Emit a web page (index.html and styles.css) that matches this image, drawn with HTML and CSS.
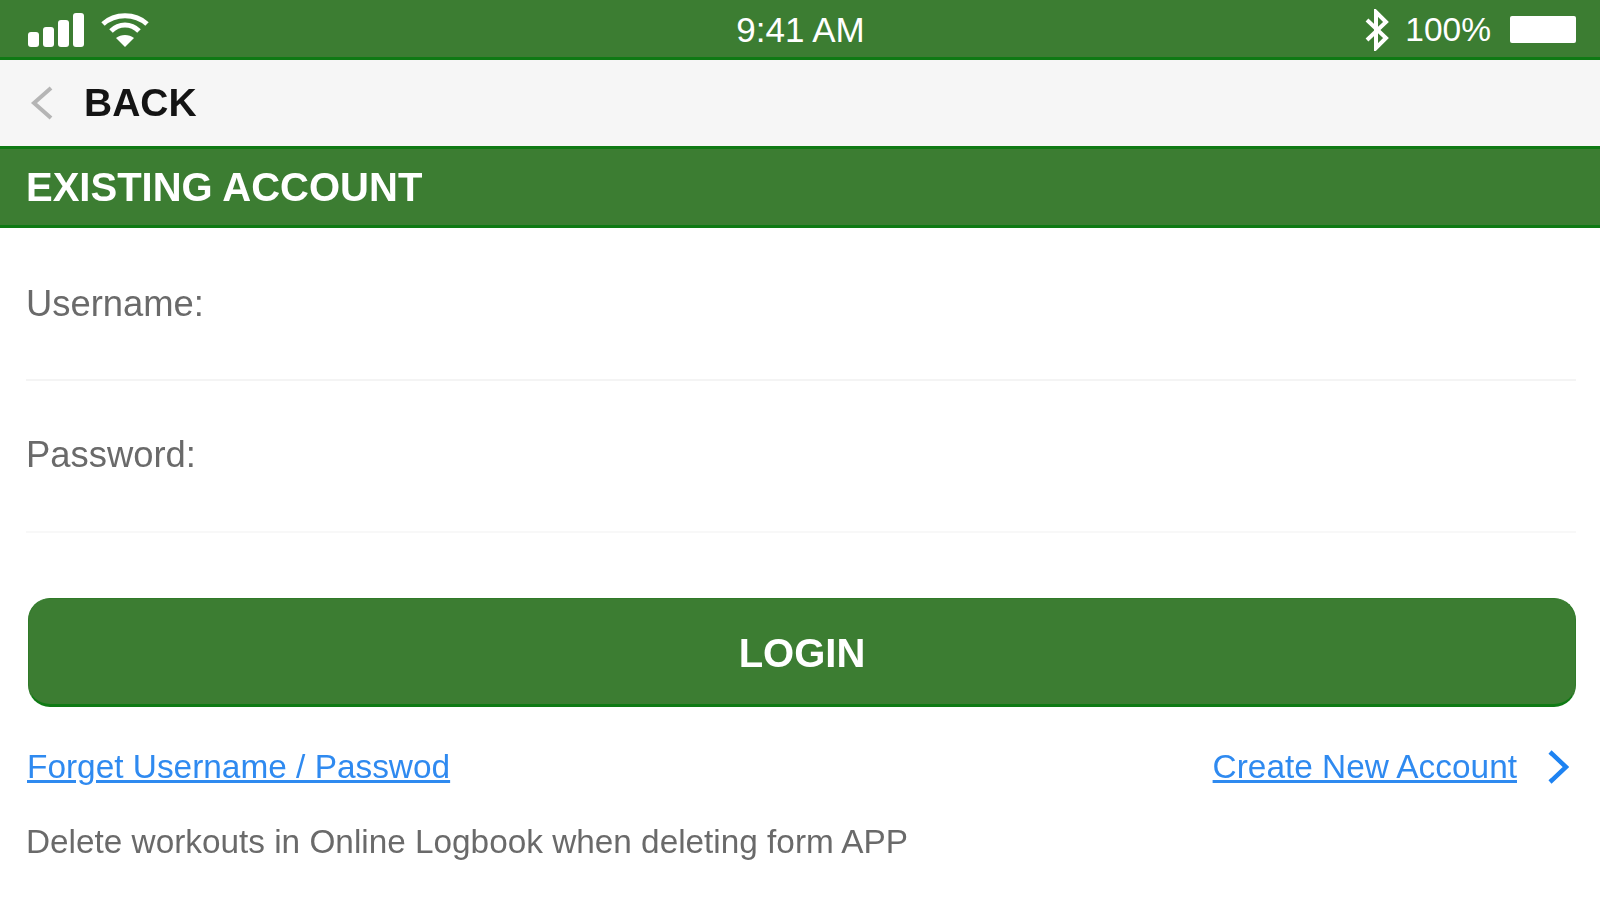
FILE: index.html
```html
<!DOCTYPE html>
<html lang="en">
  <head>
    <meta name="viewport" content="width=device-width, initial-scale=1.0" />
    <title>Existing Account</title>
    <link rel="stylesheet" href="styles.css">
  </head>
  <body>
    <div class="status-bar">
      <div class="status-left">
        <svg class="signal" width="56" height="34" viewBox="0 0 56 34">
          <rect x="0" y="19" width="11" height="15" rx="3" />
          <rect x="15" y="14" width="11" height="20" rx="3" />
          <rect x="30" y="7" width="11" height="27" rx="3" />
          <rect x="45" y="0" width="11" height="34" rx="3" />
        </svg>
        <svg class="wifi" width="50" height="38" viewBox="0 0 50 38">
          <path d="M3 13 C15 2 35 2 47 13" />
          <path d="M11 20 C19 12 31 12 39 20" />
          <path class="wifi-dot" d="M16 27 C21 23 29 23 34 27 L25 36 Z" />
        </svg>
      </div>
      <div class="status-time">9:41 AM</div>
      <div class="status-right">
        <svg class="bluetooth" width="26" height="42" viewBox="0 0 26 42">
          <path d="M3 11 L22 29 L12 39 L12 3 L22 13 L3 31" />
        </svg>
        <span class="battery-text">100%</span>
        <div class="battery"></div>
      </div>
    </div>

    <div class="back-bar">
      <svg class="back-arrow" width="24" height="36" viewBox="0 0 24 36">
        <path d="M21 3 L4 18 L21 33" />
      </svg>
      <span class="back-text">BACK</span>
    </div>

    <div class="section-head">EXISTING ACCOUNT</div>

    <div class="form">
      <div class="field">Username:</div>
      <div class="field field-second">Password:</div>

      <button class="login-btn">LOGIN</button>

      <div class="links">
        <a class="link" href="#">Forget Username / Passwod</a>
        <div class="create">
          <a class="link" href="#">Create New Account</a>
          <svg class="create-arrow" width="22" height="36" viewBox="0 0 22 36">
            <path d="M3 3 L19 18 L3 33" />
          </svg>
        </div>
      </div>

      <p class="note">Delete workouts in Online Logbook when deleting form APP</p>
    </div>
  </body>
</html>
```

FILE: styles.css
```css
* {
  box-sizing: border-box;
}

body {
  margin: 0;
  height: 900px;
  overflow: hidden;
  background-color: #fff;
  font-family: "Liberation Sans", Arial, sans-serif;
  filter: blur(0.7px);
}

.status-bar {
  height: 60px;
  padding: 2px 24px 0 28px;
  display: grid;
  grid-template-columns: 1fr auto 1fr;
  align-items: center;
  background-color: #3c7d32;
  border-bottom: 3px solid #0f7a14;
  color: #fff;
}

.status-left {
  display: flex;
  align-items: center;
  gap: 16px;
}

.signal {
  fill: #fff;
}

.wifi {
  fill: none;
  stroke: #fff;
  stroke-width: 5;
}

.wifi-dot {
  fill: #fff;
  stroke: none;
}

.status-time {
  font-size: 35px;
  margin-left: -3px;
}

.status-right {
  display: flex;
  align-items: center;
  justify-content: flex-end;
}

.bluetooth {
  fill: none;
  stroke: #fff;
  stroke-width: 4;
}

.battery-text {
  margin-left: 15px;
  font-size: 33.5px;
}

.battery {
  width: 66px;
  height: 27px;
  margin-left: 19px;
  background-color: #fff;
  border-radius: 2px;
}

.back-bar {
  height: 86px;
  padding-left: 30px;
  display: flex;
  align-items: center;
  background-color: #f6f6f6;
}

.back-arrow {
  fill: none;
  stroke: #b5b5b5;
  stroke-width: 4;
}

.back-text {
  margin-left: 30px;
  font-size: 39px;
  font-weight: bold;
  color: #141414;
}

.section-head {
  height: 82px;
  padding-left: 26px;
  display: flex;
  align-items: center;
  background-color: #3c7d32;
  border-top: 3px solid #0f7a14;
  border-bottom: 3px solid #0f7a14;
  color: #fff;
  font-size: 40px;
  font-weight: bold;
}

.form {
  padding: 0 24px 0 26px;
}

.field {
  height: 153px;
  padding-top: 55px;
  border-bottom: 2px solid #f4f4f4;
  color: #6a6a6a;
  font-size: 36.4px;
}

.field-second {
  height: 152px;
  padding-top: 53px;
  border-bottom-color: #f8f8f8;
}

.login-btn {
  display: block;
  width: 1548px;
  height: 109px;
  margin: 65px 0 0 2px;
  padding: 3px 0 0;
  background-color: #3c7d32;
  border: 1px solid #2f7a28;
  border-bottom: 3px solid #0f7a14;
  border-radius: 22px;
  color: #fff;
  font-family: inherit;
  font-size: 40px;
  font-weight: bold;
}

.links {
  margin-top: 41px;
  padding-left: 1px;
  display: flex;
  align-items: center;
  justify-content: space-between;
}

.link {
  color: #2f8af0;
  font-size: 33.4px;
  text-decoration: underline;
}

.create {
  display: flex;
  align-items: center;
  gap: 30px;
  padding-right: 7px;
}

.create-arrow {
  fill: none;
  stroke: #1e83f2;
  stroke-width: 4.5;
}

.note {
  margin: 37px 0 0;
  color: #6a6a6a;
  font-size: 33.35px;
}
```
